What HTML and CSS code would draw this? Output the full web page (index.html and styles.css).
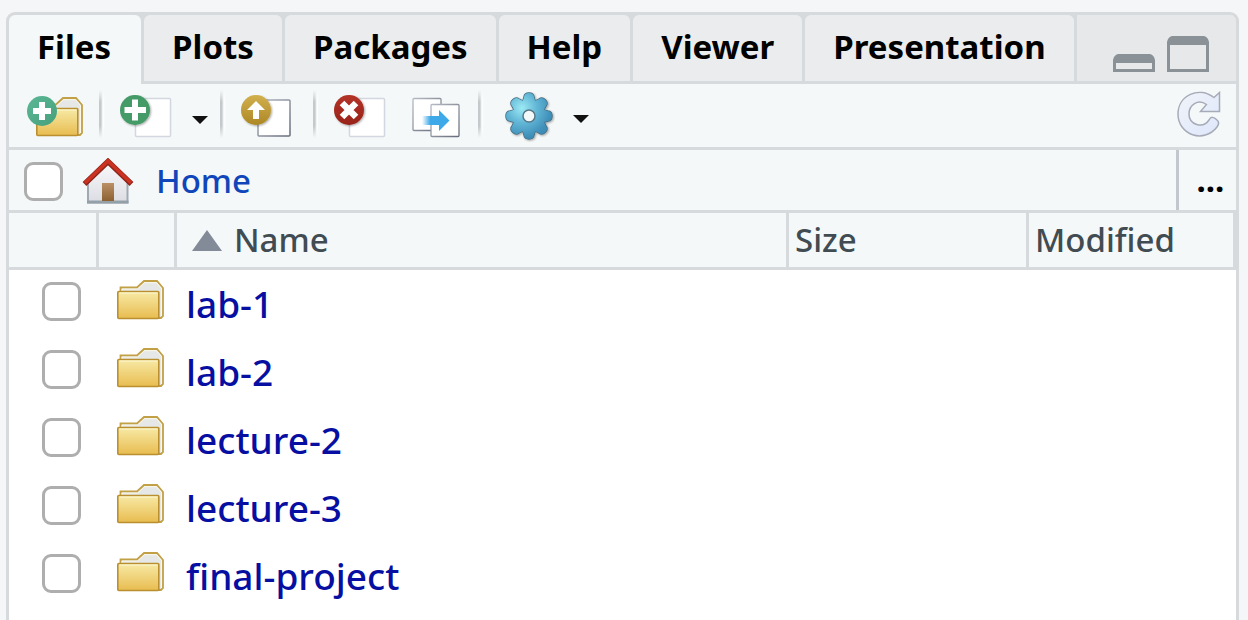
FILE: index.html
```html
<!DOCTYPE html>
<html lang="en">
<head>
<meta charset="utf-8">
<title>Files</title>
<link rel="stylesheet" href="styles.css">
</head>
<body>
<svg class="defs" width="0" height="0" aria-hidden="true">
  <defs>
    <linearGradient id="gold" x1="0" y1="0" x2="0" y2="1"><stop offset="0" stop-color="#f7eaa6"/><stop offset="1" stop-color="#e8bc50"/></linearGradient>
    <linearGradient id="teal" x1="0" y1="0" x2="1" y2="1"><stop offset="0" stop-color="#5ab795"/><stop offset="1" stop-color="#47a07c"/></linearGradient>
    <linearGradient id="amber" x1="0" y1="0" x2="0" y2="1"><stop offset="0" stop-color="#d2b04d"/><stop offset="1" stop-color="#ad8725"/></linearGradient>
    <linearGradient id="crimson" x1="0" y1="0" x2="0" y2="1"><stop offset="0" stop-color="#b43328"/><stop offset="1" stop-color="#98231a"/></linearGradient>
    <linearGradient id="wall" x1="0" y1="0" x2="0" y2="1"><stop offset="0" stop-color="#f9f9fb"/><stop offset="1" stop-color="#dcdde3"/></linearGradient>
    <linearGradient id="door" x1="0" y1="0" x2="0" y2="1"><stop offset="0" stop-color="#b98f64"/><stop offset="1" stop-color="#8c6234"/></linearGradient>
    <linearGradient id="frame" x1="0" y1="0" x2="1" y2="1"><stop offset="0" stop-color="#b6bac3"/><stop offset="1" stop-color="#666c7a"/></linearGradient>
    <linearGradient id="arrow" x1="0" y1="0" x2="1" y2="0"><stop offset="0" stop-color="#3da9e8" stop-opacity="0"/><stop offset=".3" stop-color="#3da9e8"/></linearGradient>
    <linearGradient id="ice" x1="0" y1="0" x2="1" y2="1"><stop offset="0" stop-color="#f1f3f8"/><stop offset="1" stop-color="#dde7fc"/></linearGradient>
    <radialGradient id="steel" gradientUnits="userSpaceOnUse" cx="-7" cy="-8" r="30"><stop offset="0" stop-color="#9ceaf6"/><stop offset=".5" stop-color="#62b6d5"/><stop offset="1" stop-color="#3d8db8"/></radialGradient>
    <filter id="shade" x="-20%" y="-20%" width="150%" height="150%"><feDropShadow dx="1" dy="1" stdDeviation="1" flood-opacity=".35"/></filter>
    <path id="tooth" d="M-7 -14Q-5.500 -16 -5 -19Q-4.500 -23 0 -23Q4.500 -23 5 -19Q5.500 -16 7 -14L0 0Z"/>
    <clipPath id="cog">
      <circle r="15.500"/>
      <use href="#tooth"/><use href="#tooth" transform="rotate(45)"/><use href="#tooth" transform="rotate(90)"/><use href="#tooth" transform="rotate(135)"/><use href="#tooth" transform="rotate(180)"/><use href="#tooth" transform="rotate(225)"/><use href="#tooth" transform="rotate(270)"/><use href="#tooth" transform="rotate(315)"/>
    </clipPath>
    <symbol id="folder" viewBox="0 0 47 40">
      <path d="M3.500 34V7.500H20L27 1H40L46 8V36L44 38H36Z" fill="#e6e8e7" stroke="#c2a045" stroke-width="1.800"/>
      <path d="M5 12V9H20.500L27.500 2.700H39.500L44.500 8.500V36" fill="none" stroke="#fbf8ea"/>
      <rect x=".8" y="11.500" width="41" height="27" rx="1" fill="url(#gold)" stroke="#b98f30" stroke-width="1.600"/>
      <path d="M2.500 13H40.500" stroke="#fdf8d2"/>
    </symbol>
  </defs>
</svg>

<main class="pane">
  <header class="tabbar">
    <nav class="tabs" role="tablist">
      <button class="tab tab-active" role="tab" aria-selected="true">Files</button>
      <button class="tab" role="tab" aria-selected="false">Plots</button>
      <button class="tab" role="tab" aria-selected="false">Packages</button>
      <button class="tab" role="tab" aria-selected="false">Help</button>
      <button class="tab" role="tab" aria-selected="false">Viewer</button>
      <button class="tab" role="tab" aria-selected="false">Presentation</button>
    </nav>
    <div class="window-controls">
      <button class="icon-button" aria-label="Minimize"><svg width="42" height="18" viewBox="0 0 42 18"><path fill="#8a9197" fill-rule="evenodd" d="M5 0H37Q41 1 42 6V18H0V6Q1 1 5 0ZM3 9V15H39V9Z"/></svg></button>
      <button class="icon-button" aria-label="Maximize"><svg width="42" height="36" viewBox="0 0 42 36"><path fill="#8a9197" fill-rule="evenodd" d="M5 0H37Q41 1 42 6V36H0V6Q1 1 5 0ZM3 9V33H39V9Z"/></svg></button>
    </div>
  </header>

  <div class="toolbar">
    <div class="group group-first">
      <button class="icon-button" aria-label="New folder"><svg width="57" height="46" viewBox="0 0 57 46"><use href="#folder" x="9" y="1" width="47" height="40"/><circle cx="15" cy="15" r="15" fill="url(#teal)"/><path d="M12 6h6v6h6v6h-6v6h-6v-6H6v-6h6Z" fill="#fff"/></svg></button>
    </div>
    <div class="group group-menu">
      <button class="icon-button" aria-label="New blank file"><svg width="54" height="46" viewBox="0 0 54 46"><rect x="15.500" y="3.500" width="35" height="38" rx="1" fill="#fff" stroke="#d2d7e0" stroke-width="1.500"/><circle cx="15" cy="15" r="15" fill="#459b67" filter="url(#shade)"/><path d="M12 4.500h6V12h8v6h-8v7.500h-6V18H4.500v-6H12Z" fill="#fff"/></svg></button>
      <button class="icon-button caret" aria-label="File types"><svg width="16" height="8" viewBox="0 0 16 8"><path d="M0 0H16L8 8Z" fill="#111"/></svg></button>
    </div>
    <div class="group">
      <button class="icon-button" aria-label="Upload"><svg width="54" height="46" viewBox="0 0 54 46"><rect x="17" y="5" width="32" height="36" rx="1" fill="#fff" stroke="url(#frame)" stroke-width="1.500"/><circle cx="15" cy="15" r="15" fill="url(#amber)" filter="url(#shade)"/><path d="M15 6L24 15H18V24H12V15H6Z" fill="#fff"/></svg></button>
    </div>
    <div class="group group-wide">
      <button class="icon-button" aria-label="Delete"><svg width="54" height="46" viewBox="0 0 54 46"><rect x="15.500" y="3.500" width="35" height="38" rx="1" fill="#fff" stroke="#d2d7e0" stroke-width="1.500"/><circle cx="15" cy="15" r="15" fill="url(#crimson)" filter="url(#shade)"/><path d="M8 8L22 22M22 8L8 22" stroke="#fff" stroke-width="6.500"/></svg></button>
      <button class="icon-button" aria-label="Copy or move"><svg width="48" height="46" viewBox="0 0 48 46"><rect x="1" y="3.500" width="28" height="32" rx="1" fill="#fff" stroke="url(#frame)" stroke-width="1.300"/><rect x="19" y="9.500" width="28" height="32" rx="1" fill="#fff" stroke="url(#frame)" stroke-width="1.300"/><path d="M10 21H27V15L37.500 25.500L27 36V30H10Z" fill="url(#arrow)"/></svg></button>
    </div>
    <div class="group group-gear">
      <button class="icon-button" aria-label="More file commands"><svg width="50" height="50" viewBox="-24 -24 50 50">
        <g fill="#466b7d" stroke="#466b7d" stroke-width="1.500" filter="url(#shade)"><circle r="15.500"/><use href="#tooth"/><use href="#tooth" transform="rotate(45)"/><use href="#tooth" transform="rotate(90)"/><use href="#tooth" transform="rotate(135)"/><use href="#tooth" transform="rotate(180)"/><use href="#tooth" transform="rotate(225)"/><use href="#tooth" transform="rotate(270)"/><use href="#tooth" transform="rotate(315)"/></g>
        <rect x="-24" y="-24" width="48" height="48" fill="url(#steel)" clip-path="url(#cog)"/>
        <circle r="6" fill="#f4f8f9" stroke="#577887" stroke-width="1.500"/></svg></button>
      <button class="icon-button caret" aria-label="More"><svg width="16" height="8" viewBox="0 0 16 8"><path d="M0 0H16L8 8Z" fill="#111"/></svg></button>
    </div>
    <button class="icon-button refresh" aria-label="Refresh"><svg width="44" height="46" viewBox="0 0 44 46"><path d="M37 6.500L42.500 1.500V20.500H23.500L29.500 13.500C21 7.500 12 14 12 23C12 34 26 38 32 29C34 25 37 26 40 29C42.500 31 41.500 34 40 36C27 53 1 44 1 23C1 4 22 -5 37 6.500Z" fill="url(#ice)" stroke="#a7abb8" stroke-width="1.500"/></svg></button>
  </div>

  <div class="pathbar">
    <input class="check" type="checkbox" aria-label="Select all files">
    <a class="home" href="#"><svg width="52" height="46" viewBox="0 0 52 46" aria-hidden="true"><path d="M6 23L26 5L45.500 23V44.500H6Z" fill="url(#wall)" stroke="#a1aab2" stroke-width="2"/><path d="M5 44H46.500" stroke="#94a0a8" stroke-width="3"/><rect x="20" y="25" width="12" height="18" fill="url(#door)"/><path d="M2.500 26L26 3.500L49.500 26" fill="none" stroke="#8c2419" stroke-width="5.500"/><path d="M3 25L26 3L49 25" fill="none" stroke="#cb3221" stroke-width="3.500"/></svg><span>Home</span></a>
    <button class="browse" aria-label="Go to directory">...</button>
  </div>

  <table class="files">
    <thead>
      <tr><th class="col-check"></th><th class="col-icon"></th><th class="col-name"><span class="sort"><svg width="30" height="21" viewBox="0 0 30 21" aria-hidden="true"><path d="M15 0L30 21H0Z" fill="#838a98"/></svg>Name</span></th><th class="col-size">Size</th><th class="col-modified">Modified</th></tr>
    </thead>
    <tbody>
      <tr><td><input class="check" type="checkbox" aria-label="lab-1"></td><td><svg class="folder" width="47" height="40"><use href="#folder"/></svg></td><td><a href="#">lab-1</a></td><td></td><td></td></tr>
      <tr><td><input class="check" type="checkbox" aria-label="lab-2"></td><td><svg class="folder" width="47" height="40"><use href="#folder"/></svg></td><td><a href="#">lab-2</a></td><td></td><td></td></tr>
      <tr><td><input class="check" type="checkbox" aria-label="lecture-2"></td><td><svg class="folder" width="47" height="40"><use href="#folder"/></svg></td><td><a href="#">lecture-2</a></td><td></td><td></td></tr>
      <tr><td><input class="check" type="checkbox" aria-label="lecture-3"></td><td><svg class="folder" width="47" height="40"><use href="#folder"/></svg></td><td><a href="#">lecture-3</a></td><td></td><td></td></tr>
      <tr><td><input class="check" type="checkbox" aria-label="final-project"></td><td><svg class="folder" width="47" height="40"><use href="#folder"/></svg></td><td><a href="#">final-project</a></td><td></td><td></td></tr>
    </tbody>
  </table>
</main>
</body>
</html>
```

FILE: styles.css
```css
:root {
  --line: #d6dadc;
  --surface: #f4f8f9;
}

* { box-sizing: border-box; }

body {
  margin: 0;
  padding: 12px 9px 0 6px;
  min-height: 100vh;
  display: flex;
  background: #f5f6f8;
  font-family: "Noto Sans", "Open Sans", sans-serif;
  font-size: 33px;
}

button {
  margin: 0;
  padding: 0;
  border: 0;
  background: none;
  font: inherit;
  color: #000;
}

svg { display: block; }
.defs { position: absolute; }

.pane {
  flex: 1;
  min-width: 0;
  border: 3px solid var(--line);
  border-bottom: 0;
  border-radius: 9px 9px 0 0;
  background: #fff;
  overflow: hidden;
}

.tabbar {
  display: flex;
  height: 69px;
  background: var(--line);
}

.tabs {
  display: flex;
  gap: 3px;
  padding-right: 3px;
}

.tab {
  height: 66px;
  padding: 0 28px 4px;
  border-radius: 6px 6px 0 0;
  background: #ebecee;
  font-weight: 700;
}

.tab-active {
  height: 69px;
  padding-right: 30px;
  padding-bottom: 7px;
  background: var(--surface);
}

.window-controls {
  flex: 1;
  height: 66px;
  display: flex;
  justify-content: flex-end;
  align-items: flex-end;
  gap: 12px;
  padding: 0 27px 9px;
  background: #e6e8e9;
}

.toolbar {
  display: flex;
  align-items: flex-start;
  height: 66px;
  padding-left: 18px;
  border-bottom: 3px solid var(--line);
  background: var(--surface);
}

.group {
  display: flex;
  align-items: center;
  height: 63px;
  gap: 18px;
  padding-top: 6px;
  padding-right: 18px;
}

.group + .group {
  padding-left: 21px;
  padding-top: 4px;
  background:
    linear-gradient(to bottom, var(--surface), transparent 12px 36px, var(--surface)) left 6px / 6px 48px no-repeat,
    linear-gradient(to right, #c6c9cb 2px, #e6e9ea 3px, #fff 4px, var(--surface) 6px) left 6px / 6px 48px no-repeat;
}

.group-first { padding-right: 15px; }
.group-menu { padding-right: 12px; }
.group-wide { gap: 24px; }
.group + .group-gear { padding-left: 27px; padding-top: 2px; }
.caret { padding-top: 4px; }

.refresh {
  margin-left: auto;
  padding: 7px 15px 0 0;
}

.pathbar {
  display: flex;
  align-items: center;
  height: 63px;
  padding-top: 2px;
  padding-left: 15px;
  border-bottom: 3px solid var(--line);
  background: var(--surface);
  line-height: 44px;
}

.check {
  appearance: none;
  display: block;
  width: 39px;
  height: 39px;
  margin: 0;
  border: 3px solid #aeaeae;
  border-radius: 9px;
  background: #fff;
}

.home {
  display: flex;
  align-items: center;
  gap: 22px;
  margin-left: 19px;
  color: #1046ba;
  font-weight: 500;
  text-decoration: none;
}

.browse {
  align-self: stretch;
  width: 60px;
  margin-top: -2px;
  margin-left: auto;
  padding-left: 6px;
  border-left: 3px solid #c2c6cd;
  font-weight: 700;
}

.files {
  width: 100%;
  table-layout: fixed;
  border-collapse: separate;
  border-spacing: 0;
}

.files th {
  height: 57px;
  padding: 0 6px;
  border-right: 3px solid var(--line);
  border-bottom: 3px solid var(--line);
  background: var(--surface);
  color: #414b52;
  font-weight: 500;
  line-height: 50px;
  text-align: left;
}

.files .col-check { width: 90px; }
.files .col-icon { width: 78px; }
.files .col-name { padding-left: 15px; }
.files .col-size { width: 240px; }
.files .col-modified { width: 207px; }

.sort {
  display: flex;
  align-items: center;
  gap: 12px;
}

.files td {
  height: 68px;
  padding: 0 9px 5px;
  font-size: 37px;
  font-weight: 500;
  line-height: 48px;
}

.files td:first-child { padding-left: 33px; }
.files td:nth-child(2) { padding-left: 18px; padding-bottom: 8px; }
.files td:nth-child(3) { padding-bottom: 0; }

.files a {
  color: #060fa1;
  text-decoration: none;
}
```
